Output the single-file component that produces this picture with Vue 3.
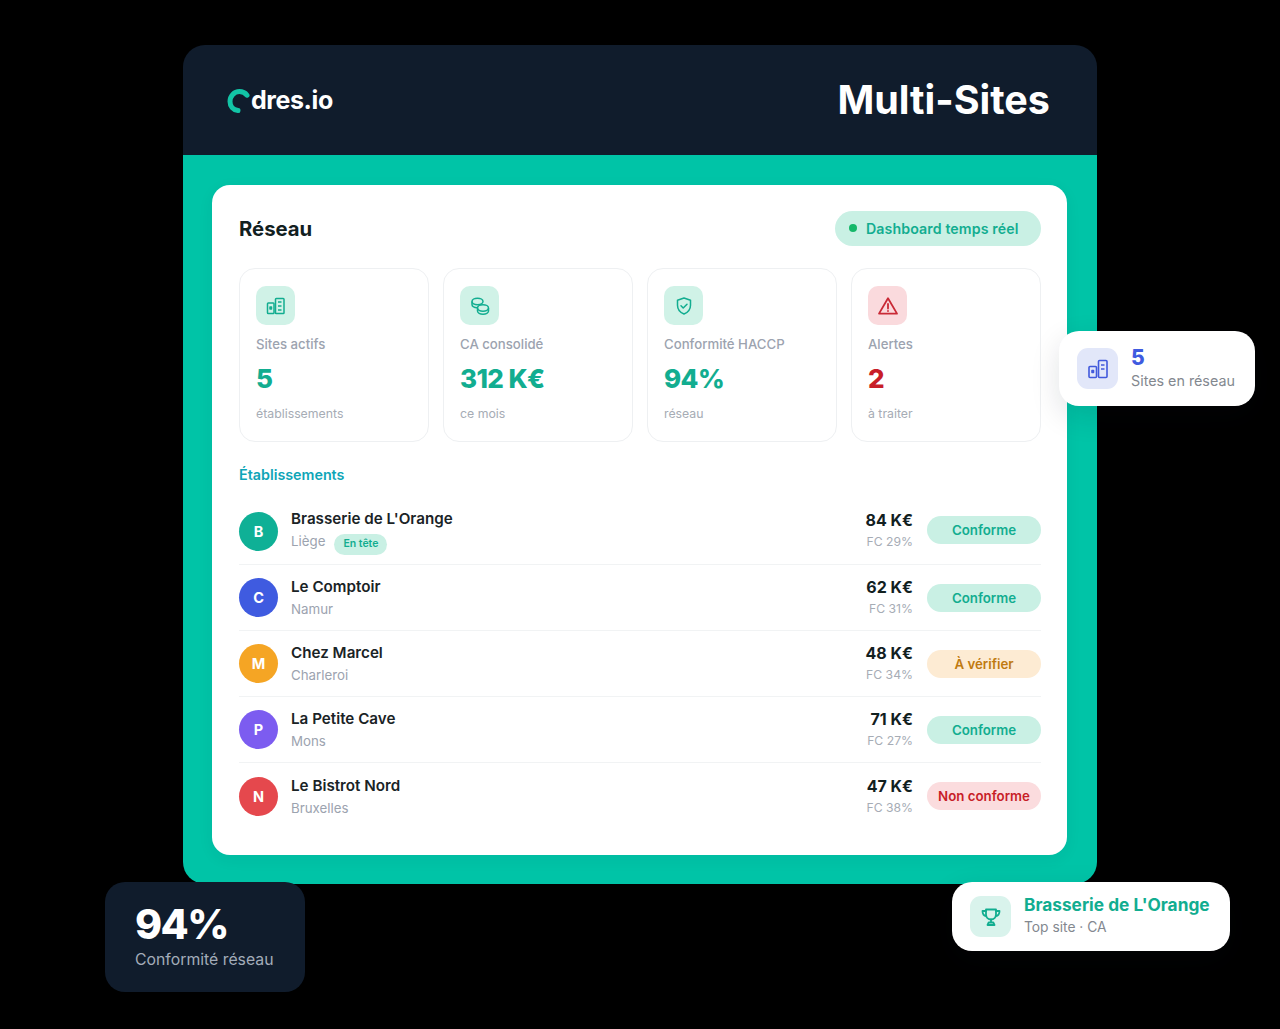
<script setup>
const stats = [
  { label: 'Sites actifs', value: '5', note: 'établissements', icon: 'building', tone: 'green' },
  { label: 'CA consolidé', value: '312 K€', note: 'ce mois', icon: 'coins', tone: 'green' },
  { label: 'Conformité HACCP', value: '94%', note: 'réseau', icon: 'shield', tone: 'green' },
  { label: 'Alertes', value: '2', note: 'à traiter', icon: 'alert', tone: 'red' },
]
const sites = [
  { initial: 'B', color: '#0fb096', name: "Brasserie de L'Orange", city: 'Liège', top: true, ca: '84 K€', fc: 'FC 29%', status: 'Conforme', kind: 'ok' },
  { initial: 'C', color: '#3f5be0', name: 'Le Comptoir', city: 'Namur', ca: '62 K€', fc: 'FC 31%', status: 'Conforme', kind: 'ok' },
  { initial: 'M', color: '#f5a524', name: 'Chez Marcel', city: 'Charleroi', ca: '48 K€', fc: 'FC 34%', status: 'À vérifier', kind: 'warn' },
  { initial: 'P', color: '#7c5cf0', name: 'La Petite Cave', city: 'Mons', ca: '71 K€', fc: 'FC 27%', status: 'Conforme', kind: 'ok' },
  { initial: 'N', color: '#e5484d', name: 'Le Bistrot Nord', city: 'Bruxelles', ca: '47 K€', fc: 'FC 38%', status: 'Non conforme', kind: 'bad' },
]
</script>

<template>
  <main class="stage">
    <section class="panel">
      <header class="top">
        <div class="logo">
          <svg class="logo-mark" width="25" height="26" viewBox="0 0 25 26" fill="none">
            <path d="M11 22.600C6 22 3 18.200 3 13.600 3 7.800 7.200 3.600 12.400 3.600c3.200 0 5.800 1.200 7.600 3.600" stroke="#12c4a6" stroke-width="5" stroke-linecap="round" />
          </svg>
          <span>dres.io</span>
        </div>
        <h1>Multi-Sites</h1>
      </header>

      <div class="teal">
        <div class="sheet">
          <div class="sheet-head">
            <h2>Réseau</h2>
            <div class="live"><i></i>Dashboard temps réel</div>
          </div>

          <div class="stats">
            <article v-for="s in stats" :key="s.label" class="stat">
              <div class="stat-icon" :class="s.tone">
                <svg v-if="s.icon === 'building'" width="22" height="22" viewBox="0 0 22 22" fill="none" stroke="#12ad90" stroke-width="1.500" stroke-linejoin="round">
                  <rect x="2.500" y="8" width="6.500" height="10.500" rx=".8" />
                  <rect x="10.500" y="3.500" width="8.500" height="15" rx=".8" />
                  <path d="M5 12h1.500v2H5zM13 7h3.500M13 11h3.500M13 15h3.500" />
                </svg>
                <svg v-else-if="s.icon === 'coins'" width="22" height="22" viewBox="0 0 22 22" fill="none" stroke="#12ad90" stroke-width="1.500">
                  <ellipse cx="8.500" cy="6.500" rx="5.500" ry="3.200" />
                  <path d="M3 6.500v3c0 1.700 2.400 3.100 5.500 3.200" />
                  <ellipse cx="14" cy="13" rx="5.500" ry="3.200" />
                  <path d="M8.500 13v3c0 1.800 2.500 3.200 5.500 3.200s5.500-1.400 5.500-3.200v-3" />
                </svg>
                <svg v-else-if="s.icon === 'shield'" width="20" height="20" viewBox="0 0 20 20" fill="none" stroke="#12ad90" stroke-width="1.500" stroke-linecap="round" stroke-linejoin="round">
                  <path d="M10 2l6.500 2.200v5c0 4.200-2.700 7.200-6.500 8.800-3.800-1.600-6.500-4.600-6.500-8.800v-5z" />
                  <path d="M7 9.800l2.200 2.200L13 8.200" />
                </svg>
                <svg v-else width="22" height="22" viewBox="0 0 22 22" fill="none" stroke="#c92a36" stroke-width="1.800" stroke-linecap="round" stroke-linejoin="round">
                  <path d="M11 3.200L20 18.600H2z" />
                  <path d="M11 9v4.600M11 16v.1" />
                </svg>
              </div>
              <div class="stat-label">{{ s.label }}</div>
              <div class="stat-value" :class="s.tone">{{ s.value }}</div>
              <div class="stat-note">{{ s.note }}</div>
            </article>
          </div>

          <h3>Établissements</h3>

          <ul class="sites">
            <li v-for="r in sites" :key="r.name" class="site">
              <span class="avatar" :style="{ background: r.color }">{{ r.initial }}</span>
              <div class="site-main">
                <div class="site-name">{{ r.name }}</div>
                <div class="site-city">{{ r.city }}<span v-if="r.top" class="tag">En tête</span></div>
              </div>
              <div class="site-num">
                <div class="ca">{{ r.ca }}</div>
                <div class="fc">{{ r.fc }}</div>
              </div>
              <span class="pill" :class="r.kind">{{ r.status }}</span>
            </li>
          </ul>
        </div>
      </div>
    </section>

    <aside class="float float-sites">
      <div class="float-icon blue">
        <svg width="24" height="24" viewBox="0 0 24 24" fill="none" stroke="#4159dc" stroke-width="1.600" stroke-linejoin="round">
          <rect x="3" y="9.500" width="7.500" height="11" rx="1" />
          <rect x="12.500" y="3.500" width="8.500" height="17" rx="1" />
          <path d="M6 13.500h1.500v2H6zM15 8h3.500M15 12h3.500" />
        </svg>
      </div>
      <div class="float-text">
        <div class="float-num">5</div>
        <div class="float-sub">Sites en réseau</div>
      </div>
    </aside>

    <aside class="float float-top">
      <div class="float-icon mint">
        <svg width="22" height="22" viewBox="0 0 22 22" fill="none" stroke="#12ad90" stroke-width="1.800" stroke-linecap="round" stroke-linejoin="round">
          <path d="M6 3.500h10v5c0 2.800-2.200 5-5 5s-5-2.200-5-5z" />
          <path d="M6 5H2.500c0 3 1.200 4.800 3.800 5.200M16 5h3.500c0 3-1.200 4.800-3.800 5.200" />
          <path d="M11 13.500v3M7.500 19h7l-1.200-2.500H8.700z" />
        </svg>
      </div>
      <div class="float-text top-text">
        <div class="top-name">Brasserie de L'Orange</div>
        <div class="top-sub">Top site · CA</div>
      </div>
    </aside>

    <aside class="float-dark">
      <div class="dark-num">94%</div>
      <div class="dark-sub">Conformité réseau</div>
    </aside>
  </main>
</template>

<style>
html, body { margin: 0; background: #000; }
</style>

<style scoped>
* { box-sizing: border-box; }
.stage {
  position: relative;
  width: 1280px;
  height: 1029px;
  padding: 45px 183px 0;
  background: #000;
  overflow: hidden;
  font-family: Inter, "Open Sans", sans-serif;
  color: #12201f;
}
.panel {
  width: 914px;
  height: 839px;
  border-radius: 22px;
  overflow: hidden;
  display: flex;
  flex-direction: column;
}
.top {
  flex: none;
  height: 110px;
  background: #101c2c;
  display: flex;
  align-items: center;
  justify-content: space-between;
  padding: 0 47px 0 44px;
}
.logo {
  display: flex;
  align-items: center;
  color: #fff;
  font-size: 25px;
  font-weight: 700;
  letter-spacing: -0.4px;
}
.logo-mark { margin-right: -1px; margin-top: 2px; }
h1 {
  margin: 0;
  color: #fff;
  font-size: 39.500px;
  line-height: 44px;
  font-weight: 700;
}
.teal {
  flex: 1;
  background: #00c4a7;
  padding: 30px 0 29px 29px;
}
.sheet {
  height: 670px;
  width: 855px;
  background: #fff;
  border-radius: 18px;
  padding: 26px 26px 0 27px;
  box-shadow: 0 4px 16px rgba(16, 28, 44, .06);
}
.sheet-head {
  display: flex;
  align-items: center;
  justify-content: space-between;
  height: 34px;
}
h2 {
  margin: 0;
  font-size: 20.300px;
  font-weight: 700;
  color: #12201f;
}
.live {
  display: flex;
  align-items: center;
  gap: 9px;
  height: 35px;
  width: 206px;
  padding-left: 14px;
  border-radius: 18px;
  background: #c9f0e4;
  color: #12ad90;
  font-size: 14.200px;
  font-weight: 600;
  letter-spacing: .1px;
  white-space: nowrap;
}
.live i {
  flex: none;
  width: 8px;
  height: 8px;
  border-radius: 50%;
  background: #15b86a;
}
.stats {
  display: grid;
  grid-template-columns: repeat(4, 190px);
  gap: 14px;
  justify-content: space-between;
  margin-top: 23px;
}
.stat {
  height: 174px;
  border: 1px solid #eef0f2;
  border-radius: 16px;
  padding: 17px 16px 0;
}
.stat-icon {
  width: 39px;
  height: 39px;
  border-radius: 10px;
  display: flex;
  align-items: center;
  justify-content: center;
}
.stat-icon.green { background: #d0f2e7; }
.stat-icon.red { background: #fadadd; }
.stat-label {
  margin-top: 10px;
  font-size: 13.200px;
  line-height: 18px;
  font-weight: 500;
  color: #9ca3af;
}
.stat-value {
  margin-top: 10px;
  font-size: 26px;
  line-height: 32px;
  font-weight: 800;
  letter-spacing: -0.6px;
}
.stat-value.green { color: #12ad90; }
.stat-value.red { color: #c81e28; }
.stat-note {
  margin-top: 11px;
  font-size: 12.300px;
  line-height: 16px;
  color: #a6acb5;
}
h3 {
  margin: 24px 0 0;
  font-size: 14.300px;
  line-height: 18px;
  font-weight: 600;
  color: #0ea5b7;
}
.sites {
  list-style: none;
  margin: 15px 0 0;
  padding: 0;
}
.site {
  display: flex;
  align-items: center;
  height: 66px;
  border-bottom: 1px solid #f1f3f4;
}
.site:last-child { border-bottom: 0; }
.site:first-child .pill { margin-top: -3px; }
.site:first-child .site-num { margin-top: -2px; }
.avatar {
  flex: none;
  width: 39px;
  height: 39px;
  border-radius: 50%;
  color: #fff;
  font-size: 14.500px;
  font-weight: 700;
  display: flex;
  align-items: center;
  justify-content: center;
}
.site-main { flex: 1; margin-left: 13px; }
.site-name {
  font-size: 15.200px;
  line-height: 20px;
  font-weight: 600;
  color: #1a2326;
}
.site-city {
  margin-top: 3px;
  font-size: 13.300px;
  line-height: 18px;
  color: #9ca3af;
  display: flex;
  align-items: flex-start;
}
.tag {
  margin: 2px 0 0 9px;
  width: 53px;
  height: 21px;
  border-radius: 11px;
  background: #c9f0e4;
  color: #12ad90;
  font-size: 10.500px;
  font-weight: 600;
  display: flex;
  align-items: center;
  justify-content: center;
}
.site-num { text-align: right; }
.ca {
  font-size: 16px;
  line-height: 20px;
  font-weight: 700;
  color: #12201f;
}
.fc {
  margin-top: 3px;
  font-size: 12.200px;
  line-height: 18px;
  color: #a6acb5;
}
.pill {
  flex: none;
  margin-left: 14px;
  width: 114px;
  height: 28px;
  border-radius: 14px;
  font-size: 13.300px;
  font-weight: 600;
  display: flex;
  align-items: center;
  justify-content: center;
}
.pill.ok { background: #c9f0e4; color: #12ad90; }
.pill.warn { background: #fdebd3; color: #c07a10; }
.pill.bad { background: #fbdcde; color: #c81e28; }
.float {
  position: absolute;
  display: flex;
  align-items: center;
  background: #fff;
  box-shadow: 0 10px 30px rgba(16, 28, 44, .12);
}
.float-sites {
  left: 1059px;
  top: 331px;
  width: 196px;
  height: 75px;
  border-radius: 20px;
  padding-left: 18px;
  gap: 13px;
}
.float-text { padding-bottom: 2px; }
.top-text { padding-bottom: 3px; }
.float-icon {
  flex: none;
  width: 41px;
  height: 41px;
  border-radius: 11px;
  display: flex;
  align-items: center;
  justify-content: center;
}
.float-icon.blue { background: #e2e7f9; }
.float-icon.mint { background: #d9f3ec; }
.float-num {
  font-size: 21px;
  line-height: 26px;
  font-weight: 800;
  color: #3f5be0;
}
.float-sub {
  font-size: 14.300px;
  line-height: 20px;
  color: #83888f;
}
.float-top {
  left: 952px;
  top: 882px;
  width: 278px;
  height: 69px;
  border-radius: 20px;
  padding-left: 18px;
  gap: 13px;
}
.top-name {
  font-size: 17.300px;
  line-height: 24px;
  font-weight: 700;
  color: #12ad90;
  white-space: nowrap;
}
.top-sub {
  font-size: 13.800px;
  line-height: 20px;
  color: #83888f;
}
.float-dark {
  position: absolute;
  left: 105px;
  top: 882px;
  width: 200px;
  height: 110px;
  border-radius: 20px;
  background: #101c2c;
  padding: 18px 0 0 30px;
}
.dark-num {
  color: #fff;
  font-size: 41px;
  line-height: 48px;
  font-weight: 800;
  letter-spacing: -1.600px;
}
.dark-sub {
  margin-top: 2px;
  color: #a3acb9;
  font-size: 15.800px;
  line-height: 20px;
  white-space: nowrap;
}
</style>
